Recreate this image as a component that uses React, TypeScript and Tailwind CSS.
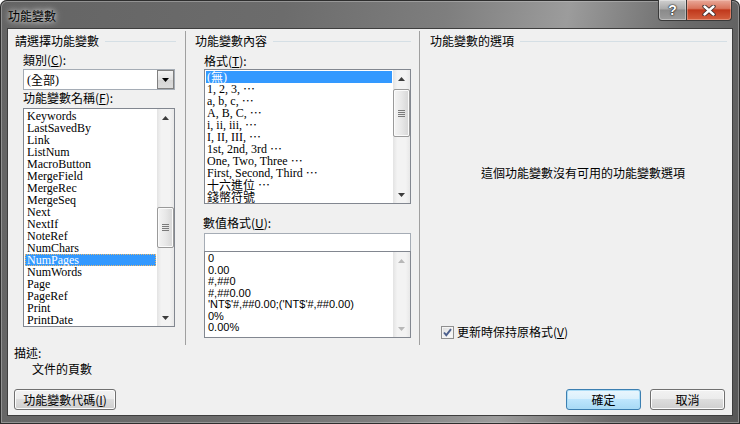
import React from "react";

const UI = "font-['Noto_Sans_CJK_TC','Noto_Sans_CJK_SC',sans-serif]";
const SERIF = "font-['Liberation_Serif','Noto_Sans_CJK_TC',serif]";
const SANS = "font-['Liberation_Sans','Noto_Sans_CJK_TC',sans-serif]";

function Arrow({ up, disabled }: { up?: boolean; disabled?: boolean }) {
  return (
    <div className="h-[17px] flex items-center justify-center">
      <svg width="7" height="4" viewBox="0 0 7 4">
        <path
          d={up ? "M0 4 L3.5 0 L7 4 Z" : "M0 0 L7 0 L3.5 4 Z"}
          fill={disabled ? "#b8b8b8" : "#3c3c3c"}
        />
      </svg>
    </div>
  );
}

function ScrollBar({
  thumbTop,
  thumbH,
  disabled,
}: {
  thumbTop?: number;
  thumbH?: number;
  disabled?: boolean;
}) {
  return (
    <div className="w-[17px] h-full flex flex-col bg-[linear-gradient(to_right,#e3e3e3,#f3f3f3_25%,#f3f3f3_75%,#e8e8e8)]">
      <Arrow up disabled={disabled} />
      <div className="flex-1 flex flex-col">
        {thumbH ? (
          <div
            className="rounded-[2px] border border-[#9a9a9a] bg-[linear-gradient(to_right,#f4f4f4,#e8e8e8_50%,#d6d6d6)] shadow-[inset_0_0_0_1px_#fbfbfb] flex flex-col items-center justify-center gap-[1px]"
            style={{ marginTop: (thumbTop || 0) - 17, height: thumbH }}
          >
            <div className="w-[7px] h-px bg-[#7a7a7a]" />
            <div className="w-[7px] h-px bg-[#7a7a7a]" />
            <div className="w-[7px] h-px bg-[#7a7a7a]" />
            <div className="w-[7px] h-px bg-[#7a7a7a]" />
          </div>
        ) : null}
      </div>
      <Arrow disabled={disabled} />
    </div>
  );
}

const names = [
  "Keywords",
  "LastSavedBy",
  "Link",
  "ListNum",
  "MacroButton",
  "MergeField",
  "MergeRec",
  "MergeSeq",
  "Next",
  "NextIf",
  "NoteRef",
  "NumChars",
  "NumPages",
  "NumWords",
  "Page",
  "PageRef",
  "Print",
  "PrintDate",
];

type Fmt = { t: string; cjk?: boolean; dots?: boolean; sp?: boolean };
const formats: Fmt[] = [
  { t: "(無)" },
  { t: "1, 2, 3,", dots: true, sp: true },
  { t: "a, b, c,", dots: true, sp: true },
  { t: "A, B, C,", dots: true, sp: true },
  { t: "i, ii, iii,", dots: true, sp: true },
  { t: "I, II, III,", dots: true, sp: true },
  { t: "1st, 2nd, 3rd", dots: true, sp: true },
  { t: "One, Two, Three", dots: true, sp: true },
  { t: "First, Second, Third", dots: true, sp: true },
  { t: "十六進位", cjk: true, dots: true, sp: true },
  { t: "錢幣符號", cjk: true },
];

const numbers = [
  "0",
  "0.00",
  "#,##0",
  "#,##0.00",
  "'NT$'#,##0.00;('NT$'#,##0.00)",
  "0%",
  "0.00%",
];

function Btn({
  children,
  w,
  def,
}: {
  children: React.ReactNode;
  w: string;
  def?: boolean;
}) {
  return (
    <div
      className={`${w} h-[21px] flex items-center justify-center rounded-[3px] border leading-[16px] ${
        def
          ? "border-[#3c7fb1] shadow-[inset_0_0_0_1px_#aadcf6] bg-[linear-gradient(to_bottom,#eaf6fd_0%,#d9f0fc_50%,#bee6fd_50%,#a7d9f5_100%)]"
          : "border-[#707070] shadow-[inset_0_0_0_1px_#fcfcfc] bg-[linear-gradient(to_bottom,#f2f2f2_0%,#ebebeb_50%,#dddddd_50%,#cfcfcf_100%)]"
      }`}
    >
      {children}
    </div>
  );
}

export default function App() {
  return (
    <div
      className={`w-[740px] h-[424px] flex flex-col rounded-t-[7px] bg-[linear-gradient(100deg,#646464_0%,#6c6c6c_35%,#7e7e7e_55%,#9c9c9c_70%,#6c6c6c_84%,#575757_100%)] shadow-[inset_0_0_0_1px_#2e2e2e,inset_0_0_0_2px_rgba(200,200,200,0.45)] ${UI} text-[12px] text-black`}
    >
      {/* title bar */}
      <div className="h-[28px] flex justify-between items-start">
        <div className="pl-[8px] pt-[8px] leading-[16px] text-[12px] text-black [text-shadow:0_0_5px_rgba(255,255,255,0.9),0_0_9px_rgba(255,255,255,0.6)]">
          功能變數
        </div>
        <div className="mr-[8px] flex h-[21px]">
          <div className="w-[29px] h-[21px] rounded-bl-[4px] border border-t-0 border-[#3a3a3a] bg-[linear-gradient(to_bottom,#d0d0d0_0%,#a9a9a9_45%,#8a8a8a_50%,#9b9b9b_100%)] shadow-[inset_0_0_0_1px_rgba(255,255,255,0.35)] flex items-center justify-center">
            <span className="font-['Liberation_Sans',sans-serif] font-bold text-[14px] leading-[14px] text-white [text-shadow:0_0_1px_#222,0_0_1px_#222,0_0_2px_#222]">
              ?
            </span>
          </div>
          <div className="w-[45px] h-[21px] rounded-br-[4px] border border-t-0 border-l-0 border-[#3a3a3a] bg-[linear-gradient(to_bottom,#e9a99a_0%,#d9745c_42%,#c0381c_50%,#d4603f_100%)] shadow-[inset_0_0_0_1px_rgba(255,220,210,0.35)] flex items-center justify-center">
            <svg width="14" height="11" viewBox="0 0 14 11">
              <path
                d="M2.5 1.5 L11.5 9.5 M11.5 1.5 L2.5 9.5"
                stroke="#3a2a2a"
                strokeWidth="4.2"
                strokeLinecap="round"
              />
              <path
                d="M2.5 1.5 L11.5 9.5 M11.5 1.5 L2.5 9.5"
                stroke="#ffffff"
                strokeWidth="2.4"
                strokeLinecap="round"
              />
            </svg>
          </div>
        </div>
      </div>

      {/* client area */}
      <div className="ml-[7px] w-[726px] h-[388px] border border-[#3e3e3e] bg-[#f0f0f0] flex flex-col">
        <div className="flex mt-[2px] h-[314px]">
          {/* column 1 */}
          <div className="w-[178px] border-r border-[#a0a0a0] flex flex-col">
            <div className="flex items-center h-[16px] mt-[2px] pl-[7px] pr-[9px] gap-[6px]">
              <span className="leading-[16px] whitespace-nowrap">請選擇功能變數</span>
              <div className="flex-1 h-px bg-[#d5dfe5]" />
            </div>
            <div className="mt-[3px] pl-[15px] leading-[16px]">
              類別(<span className="underline">C</span>):
            </div>
            <div className="ml-[15px] mt-[1px] w-[152px] h-[21px] border border-[#a5acb5] bg-white flex">
              <div className="flex-1 pl-[3px] flex items-center">
                <span className={`${SERIF} text-[12px] leading-[14px]`}>(</span>
                <span className={`${UI} text-[12px] leading-[14px]`}>全部</span>
                <span className={`${SERIF} text-[12px] leading-[14px]`}>)</span>
              </div>
              <div className="w-[17px] h-full border border-[#808080] bg-[linear-gradient(to_bottom,#f3f3f3,#e2e2e2_50%,#d4d4d4_50%,#dcdcdc)] flex items-center justify-center">
                <svg width="7" height="4" viewBox="0 0 7 4">
                  <path d="M0 0 L7 0 L3.5 4 Z" fill="#000" />
                </svg>
              </div>
            </div>
            <div className="pl-[15px] leading-[16px]">
              功能變數名稱(<span className="underline">F</span>):
            </div>
            <div className="ml-[15px] mt-[2px] w-[152px] h-[219px] border border-[#828790] bg-white flex">
              <div className={`flex-1 pt-[1px] px-[1px] ${SERIF} text-[12px]`}>
                {names.map((n) => (
                  <div
                    key={n}
                    className={`h-[12px] pl-[2px] flex items-center whitespace-nowrap ${
                      n === "NumPages"
                        ? "bg-[#3399ff] text-white outline outline-1 outline-dotted outline-[#e8b870] -outline-offset-1"
                        : ""
                    }`}
                  >
                    <span className="leading-[12px] h-[12px]">{n}</span>
                  </div>
                ))}
              </div>
              <ScrollBar thumbTop={98} thumbH={41} />
            </div>
          </div>

          {/* column 2 */}
          <div className="w-[234px] border-r border-[#a0a0a0] flex flex-col">
            <div className="flex items-center h-[16px] mt-[2px] pl-[9px] pr-[8px] gap-[6px]">
              <span className="leading-[16px] whitespace-nowrap">功能變數內容</span>
              <div className="flex-1 h-px bg-[#d5dfe5]" />
            </div>
            <div className="mt-[4px] pl-[18px] leading-[16px]">
              格式(<span className="underline">T</span>):
            </div>
            <div className="ml-[18px] w-[207px] h-[135px] border border-[#828790] bg-white flex">
              <div className="flex-1 pt-[1px] px-[1px] text-[12px]">
                {formats.map((f, i) => (
                  <div
                    key={f.t}
                    className={`h-[12px] pl-[1px] flex items-center whitespace-nowrap ${
                      i === 0 ? "bg-[#3399ff] text-white" : ""
                    }`}
                  >
                    {f.cjk ? (
                      <span className={`${UI} leading-[12px] h-[12px]`}>{f.t}</span>
                    ) : i === 0 ? (
                      <>
                        <span className={`${SERIF} leading-[12px] h-[12px]`}>(</span>
                        <span className={`${UI} leading-[12px] h-[12px]`}>無</span>
                        <span className={`${SERIF} leading-[12px] h-[12px]`}>)</span>
                      </>
                    ) : (
                      <span className={`${SERIF} leading-[12px] h-[12px]`}>{f.t}</span>
                    )}
                    {f.dots ? (
                      <span className={`${UI} leading-[12px] h-[12px] ml-[3px]`}>⋯</span>
                    ) : null}
                  </div>
                ))}
              </div>
              <ScrollBar thumbTop={19} thumbH={48} />
            </div>
            <div className="mt-[11px] pl-[17px] leading-[16px]">
              數值格式(<span className="underline">U</span>):
            </div>
            <div className="ml-[18px] mt-[2px] w-[207px] h-[19px] border border-[#a5acb5] bg-white" />
            <div className="ml-[18px] -mt-px w-[207px] h-[87px] border border-[#828790] bg-white flex">
              <div className={`flex-1 pt-[1px] pl-[3px] ${SANS} text-[11px]`}>
                {numbers.map((n) => (
                  <div key={n} className="h-[11.5px] flex items-center whitespace-nowrap">
                    <span className="leading-[11px] h-[11px]">{n}</span>
                  </div>
                ))}
              </div>
              <ScrollBar disabled />
            </div>
          </div>

          {/* column 3 */}
          <div className="flex-1 flex flex-col">
            <div className="flex items-center h-[16px] mt-[2px] pl-[10px] pr-[5px] gap-[6px]">
              <span className="leading-[16px] whitespace-nowrap">功能變數的選項</span>
              <div className="flex-1 h-px bg-[#d5dfe5]" />
            </div>
            <div className="mt-[116px] pl-[14px] text-center leading-[16px]">
              這個功能變數沒有可用的功能變數選項
            </div>
            <div className="mt-[143px] pl-[21px] flex items-center gap-[3px] h-[16px]">
              <div className="w-[13px] h-[13px] border border-[#8f8f8f] bg-[linear-gradient(135deg,#dcdcdc,#ffffff)] shadow-[inset_0_0_0_1px_#f4f4f4] flex items-center justify-center">
                <svg width="11" height="11" viewBox="0 0 11 11">
                  <path
                    d="M2 5.5 L4.3 8.2 L9 2.2"
                    stroke="#4c5f8c"
                    strokeWidth="1.9"
                    fill="none"
                  />
                </svg>
              </div>
              <span className="leading-[16px] whitespace-nowrap">
                更新時保持原格式(<span className="underline">V</span>)
              </span>
            </div>
          </div>
        </div>

        {/* description */}
        <div className="pl-[6px] leading-[16px]">描述:</div>
        <div className="pl-[24px] leading-[16px]">文件的頁數</div>

        {/* buttons */}
        <div className="mt-[12px] flex justify-between pl-[6px] pr-[7px]">
          <Btn w="w-[102px]">
            功能變數代碼(<span className="underline">I</span>)
          </Btn>
          <div className="flex gap-[9px]">
            <Btn w="w-[75px]" def>
              確定
            </Btn>
            <Btn w="w-[75px]">取消</Btn>
          </div>
        </div>
      </div>
    </div>
  );
}
